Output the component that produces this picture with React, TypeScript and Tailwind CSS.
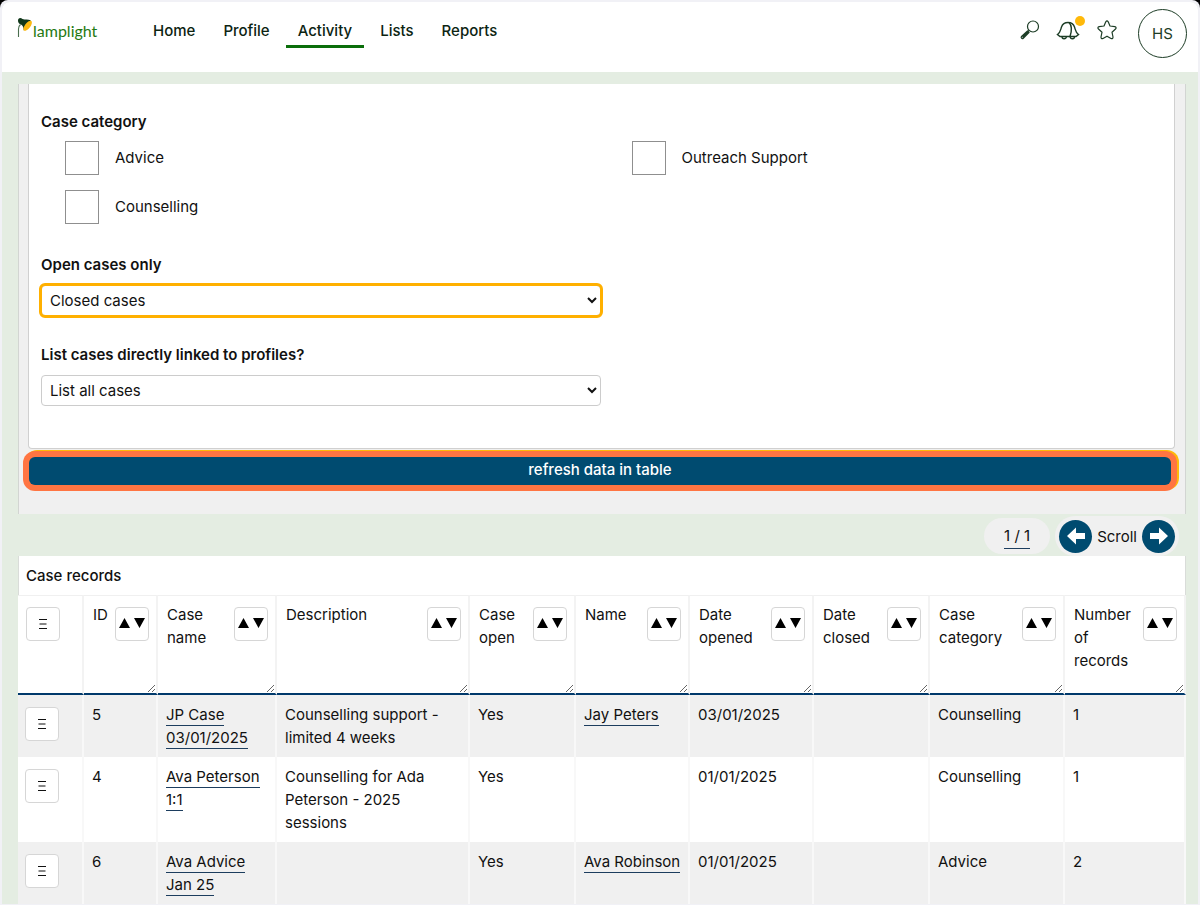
import React from "react";

type Column = { label: string; width: string };

const columns: Column[] = [
  { label: "ID", width: "w-[74px]" },
  { label: "Case name", width: "w-[119px]" },
  { label: "Description", width: "w-[193px]" },
  { label: "Case open", width: "w-[106px]" },
  { label: "Name", width: "w-[114px]" },
  { label: "Date opened", width: "w-[124px]" },
  { label: "Date closed", width: "w-[116px]" },
  { label: "Case category", width: "w-[135px]" },
  { label: "Number of records", width: "w-[121px]" },
];

type Row = {
  id: string;
  caseName: string;
  description: string;
  open: string;
  name: string;
  opened: string;
  closed: string;
  category: string;
  records: string;
};

const rows: Row[] = [
  {
    id: "5",
    caseName: "JP Case 03/01/2025",
    description: "Counselling support - limited 4 weeks",
    open: "Yes",
    name: "Jay Peters",
    opened: "03/01/2025",
    closed: "",
    category: "Counselling",
    records: "1",
  },
  {
    id: "4",
    caseName: "Ava Peterson 1:1",
    description: "Counselling for Ada Peterson - 2025 sessions",
    open: "Yes",
    name: "",
    opened: "01/01/2025",
    closed: "",
    category: "Counselling",
    records: "1",
  },
  {
    id: "6",
    caseName: "Ava Advice Jan 25",
    description: "",
    open: "Yes",
    name: "Ava Robinson",
    opened: "01/01/2025",
    closed: "",
    category: "Advice",
    records: "2",
  },
];

const navItems = ["Home", "Profile", "Activity", "Lists", "Reports"];

function Logo() {
  return (
    <a href="#" className="flex w-[125px] items-start pl-[15px] pt-[15px]" aria-label="lamplight">
      <svg width="16" height="22" viewBox="0 0 16 22" className="shrink-0" aria-hidden="true">
        <path d="M1.500 20V12C1.500 9.500 2.200 8.500 3.500 7.500" fill="none" stroke="#4b6e4f" strokeWidth="1.100" />
        <path d="M1 3.500C1 1 3.500.3 5.500 2 8 3.200 11 2 13.800 3.300L6.800 13.500C6.500 10.500 6 8.500 4 7.500 2 7 1 5.500 1 3.500Z" fill="#10371a" />
        <ellipse cx="10.600" cy="8.800" rx="6" ry="2.700" transform="rotate(-52 10.600 8.800)" fill="#fbb911" />
      </svg>
      <span className="pt-1 font-[Lato] text-base leading-5 text-[#1f7a12]">lamplight</span>
    </a>
  );
}

function MenuButton() {
  return (
    <button
      type="button"
      aria-label="Row menu"
      className="flex size-[34px] items-center justify-center rounded border border-[#d6d6d6] bg-white"
    >
      <svg width="10" height="12" viewBox="0 0 10 12" aria-hidden="true">
        <path d="M1 1.500h8M1.500 6h7M1 10.500h8" stroke="#111" strokeWidth="1" />
      </svg>
    </button>
  );
}

function SortButton({ label }: { label: string }) {
  return (
    <button
      type="button"
      aria-label={`Sort by ${label}`}
      className="flex size-[34px] shrink-0 items-center justify-center rounded border border-[#d6d6d6] bg-white pb-[2px]"
    >
      <svg width="28" height="12" viewBox="0 0 28 12" aria-hidden="true">
        <path d="M1 11 6.500 1 12 11Z M16 1H27L21.500 11Z" fill="#000" />
      </svg>
    </button>
  );
}

function CheckOption({ label }: { label: string }) {
  return (
    <label className="flex items-center gap-4 pl-6">
      <input type="checkbox" className="size-[34px] appearance-none border border-[#8f8f8f] bg-white" />
      <span className="pb-[2px]">{label}</span>
    </label>
  );
}

function ScrollArrow({ direction }: { direction: "left" | "right" }) {
  return (
    <button
      type="button"
      aria-label={`Scroll ${direction}`}
      className="flex size-[33px] items-center justify-center rounded-full bg-[#004b70]"
    >
      <svg width="20" height="20" viewBox="0 0 20 20" aria-hidden="true">
        {direction === "left" ? (
          <path d="M1 10 10 1.500V7H19V13H10V18.500Z" fill="#fff" />
        ) : (
          <path d="M19 10 10 1.500V7H1V13H10V18.500Z" fill="#fff" />
        )}
      </svg>
    </button>
  );
}

const linkClass = "border-b border-[#1c3d5e] pb-px";

export default function App() {
  return (
    <div className="bg-black font-[Inter,sans-serif] text-[15px] leading-[23px] text-[#111]">
      <div className="rounded-t-lg bg-[#f1f1f6] px-[2px] pb-px pt-[2px]">
        <div className="rounded-t-lg bg-[#e4ede2]">
          <header className="flex h-[70px] items-start rounded-t-lg bg-white pr-[11px]">
            <Logo />
            <nav className="ml-[14px] flex gap-1 pt-[17px]">
              {navItems.map((item) => (
                <a
                  key={item}
                  href="#"
                  aria-current={item === "Activity" ? "page" : undefined}
                  className={
                    item === "Activity"
                      ? "border-b-[3px] border-[#0b6e0b] px-3 pb-[3px] font-medium text-[#0c2412]"
                      : "px-3 font-medium text-[#0c2412]"
                  }
                >
                  {item}
                </a>
              ))}
            </nav>
            <div className="ml-auto flex items-start gap-4 text-[#1d3d26]">
              <button type="button" aria-label="Search" className="mt-[17px]">
                <svg width="22" height="22" viewBox="0 0 22 22" fill="none" stroke="currentColor" strokeWidth="1.200">
                  <circle cx="15" cy="7.500" r="5.500" />
                  <path d="M11 11.500 9.500 13M9.500 12 3.500 17.500C2.500 18.500 4 20.500 5.300 19.300L11 13.500ZM4.500 18.500 10 13" />
                </svg>
              </button>
              <button type="button" aria-label="Notifications" className="relative mt-[17px]">
                <svg width="24" height="22" viewBox="0 0 24 22" fill="none" stroke="currentColor" strokeWidth="1.400">
                  <path d="M1.500 15.500C4.500 13.500 4.500 11 5.500 8 6.500 5 9 3.500 12 3.500S17.500 5 18.500 8C19.500 11 19.500 13.500 22.500 15.500L20 17.500H4Z" />
                  <path d="M13 3.500C16.500 7 15.500 13 14 17.500M6 17.500C6 20.500 10 20.500 10.500 17.500M14 17.500C14.500 20.500 18.500 20.500 18.500 17.500" />
                </svg>
                <span className="absolute -right-[5px] -top-[3px] size-[10px] rounded-full bg-[#ffb90a]" />
              </button>
              <button type="button" aria-label="Favourites" className="mt-[17px]">
                <svg width="22" height="22" viewBox="0 0 22 22" fill="none" stroke="currentColor" strokeWidth="1.200" strokeLinejoin="round">
                  <path d="M9.800 2.800Q11 1 12.200 2.800L14 7 18.800 7.700Q21 8.300 19.500 10L16 13.200 17 18Q17 20.300 15 19.500L11 17.200 7 19.500Q5 20.300 5 18L6 13.200 2.500 10Q1 8.300 3.200 7.700L8 7Z" />
                </svg>
              </button>
              <button
                type="button"
                className="ml-1 mt-[7px] flex size-[49px] items-center justify-center rounded-full border border-[#1d3d26]"
              >
                HS
              </button>
            </div>
          </header>

          <main className="pl-4 pr-3 pt-3">
            <form className="border-x border-[#d2d5d2] bg-[#f0f0f0] pl-[9px] pr-[10px] pb-[23px]" onSubmit={(e) => e.preventDefault()}>
              <div className="rounded-b border border-t-0 border-[#d0d0d0] bg-white pb-[42px] pl-3 pt-[26px]">
                <fieldset>
                  <legend className="font-semibold">Case category</legend>
                  <div className="mt-2 grid grid-cols-2 gap-y-[15px]">
                    <CheckOption label="Advice" />
                    <CheckOption label="Outreach Support" />
                    <CheckOption label="Counselling" />
                  </div>
                </fieldset>
                <div className="mt-[29px] w-1/2 pr-[7px]">
                  <label htmlFor="open-cases" className="block font-semibold">Open cases only</label>
                  <select
                    id="open-cases"
                    defaultValue="Closed cases"
                    className="mt-[9px] block h-[31px] w-full rounded border border-[#ccc] bg-white px-1 outline-[3px] -outline-offset-1 outline-[#ffb000] outline-solid"
                  >
                    <option>Closed cases</option>
                  </select>
                  <label htmlFor="linked-cases" className="mt-[27px] block font-semibold">
                    List cases directly linked to profiles?
                  </label>
                  <select
                    id="linked-cases"
                    defaultValue="List all cases"
                    className="mt-[9px] block h-[31px] w-full rounded border border-[#ccc] bg-white px-1"
                  >
                    <option>List all cases</option>
                  </select>
                </div>
              </div>
              <div className="-ml-[5px] -mr-[2px] mt-[2px] flex rounded-xl bg-[#ff7542] p-[6px] shadow-[2px_-1px_0_#ffb90a]">
                <button type="submit" className="h-7 grow rounded-md bg-[#004b70] pb-[2px] font-medium leading-6 text-white">
                  refresh data in table
                </button>
              </div>
            </form>

            <div className="flex h-[42px] items-center justify-end gap-[5px] pr-[7px] pt-[2px]">
              <div className="flex h-9 items-center rounded-full bg-[#f0f0f0] px-5">
                <a href="#" className={linkClass}>1 / 1</a>
              </div>
              <div className="flex h-10 items-center gap-[5px] rounded-full bg-[#f0f0f0] px-[4px]">
                <ScrollArrow direction="left" />
                <span>Scroll</span>
                <ScrollArrow direction="right" />
              </div>
            </div>

            <table className="w-full table-fixed border-separate border-spacing-0 text-left">
              <caption className="border-x border-[#d9dcd9] bg-white px-[7px] py-2 text-left font-medium">Case records</caption>
              <thead>
                <tr className="align-top">
                  <th className="w-[66px] border-b-2 border-r-2 border-t border-b-[#00396b] border-r-[#f3f3f3] border-t-[#f0f0f0] bg-white px-2 pt-[11px]">
                    <MenuButton />
                  </th>
                  {columns.map((c) => (
                    <th
                      key={c.label}
                      className={`${c.width} border-b-2 border-r-2 border-t border-b-[#00396b] border-r-[#f3f3f3] border-t-[#f0f0f0] bg-white p-0 font-normal`}
                    >
                      <div className="flex h-[97px] resize-x items-start justify-between gap-1 overflow-hidden pl-[9px] pr-[7px]">
                        <span className="pt-[7px]">{c.label}</span>
                        <span className="pt-[11px]">
                          <SortButton label={c.label} />
                        </span>
                      </div>
                    </th>
                  ))}
                </tr>
              </thead>
              <tbody>
                {rows.map((r) => (
                  <tr key={r.id} className="bg-white align-top odd:bg-[#f0f0f0] [&>td]:border-r-2 [&>td]:border-[#f8f8f8] [&>td]:px-2 [&>td]:py-2">
                    <td>
                      <div className="-ml-px pt-1">
                        <MenuButton />
                      </div>
                    </td>
                    <td>{r.id}</td>
                    <td>
                      <a href="#" className={linkClass}>{r.caseName}</a>
                    </td>
                    <td>{r.description}</td>
                    <td>{r.open}</td>
                    <td>
                      {r.name && (
                        <a href="#" className={`${linkClass} whitespace-nowrap`}>{r.name}</a>
                      )}
                    </td>
                    <td>{r.opened}</td>
                    <td>{r.closed}</td>
                    <td>{r.category}</td>
                    <td>{r.records}</td>
                  </tr>
                ))}
              </tbody>
            </table>
          </main>
        </div>
      </div>
    </div>
  );
}
